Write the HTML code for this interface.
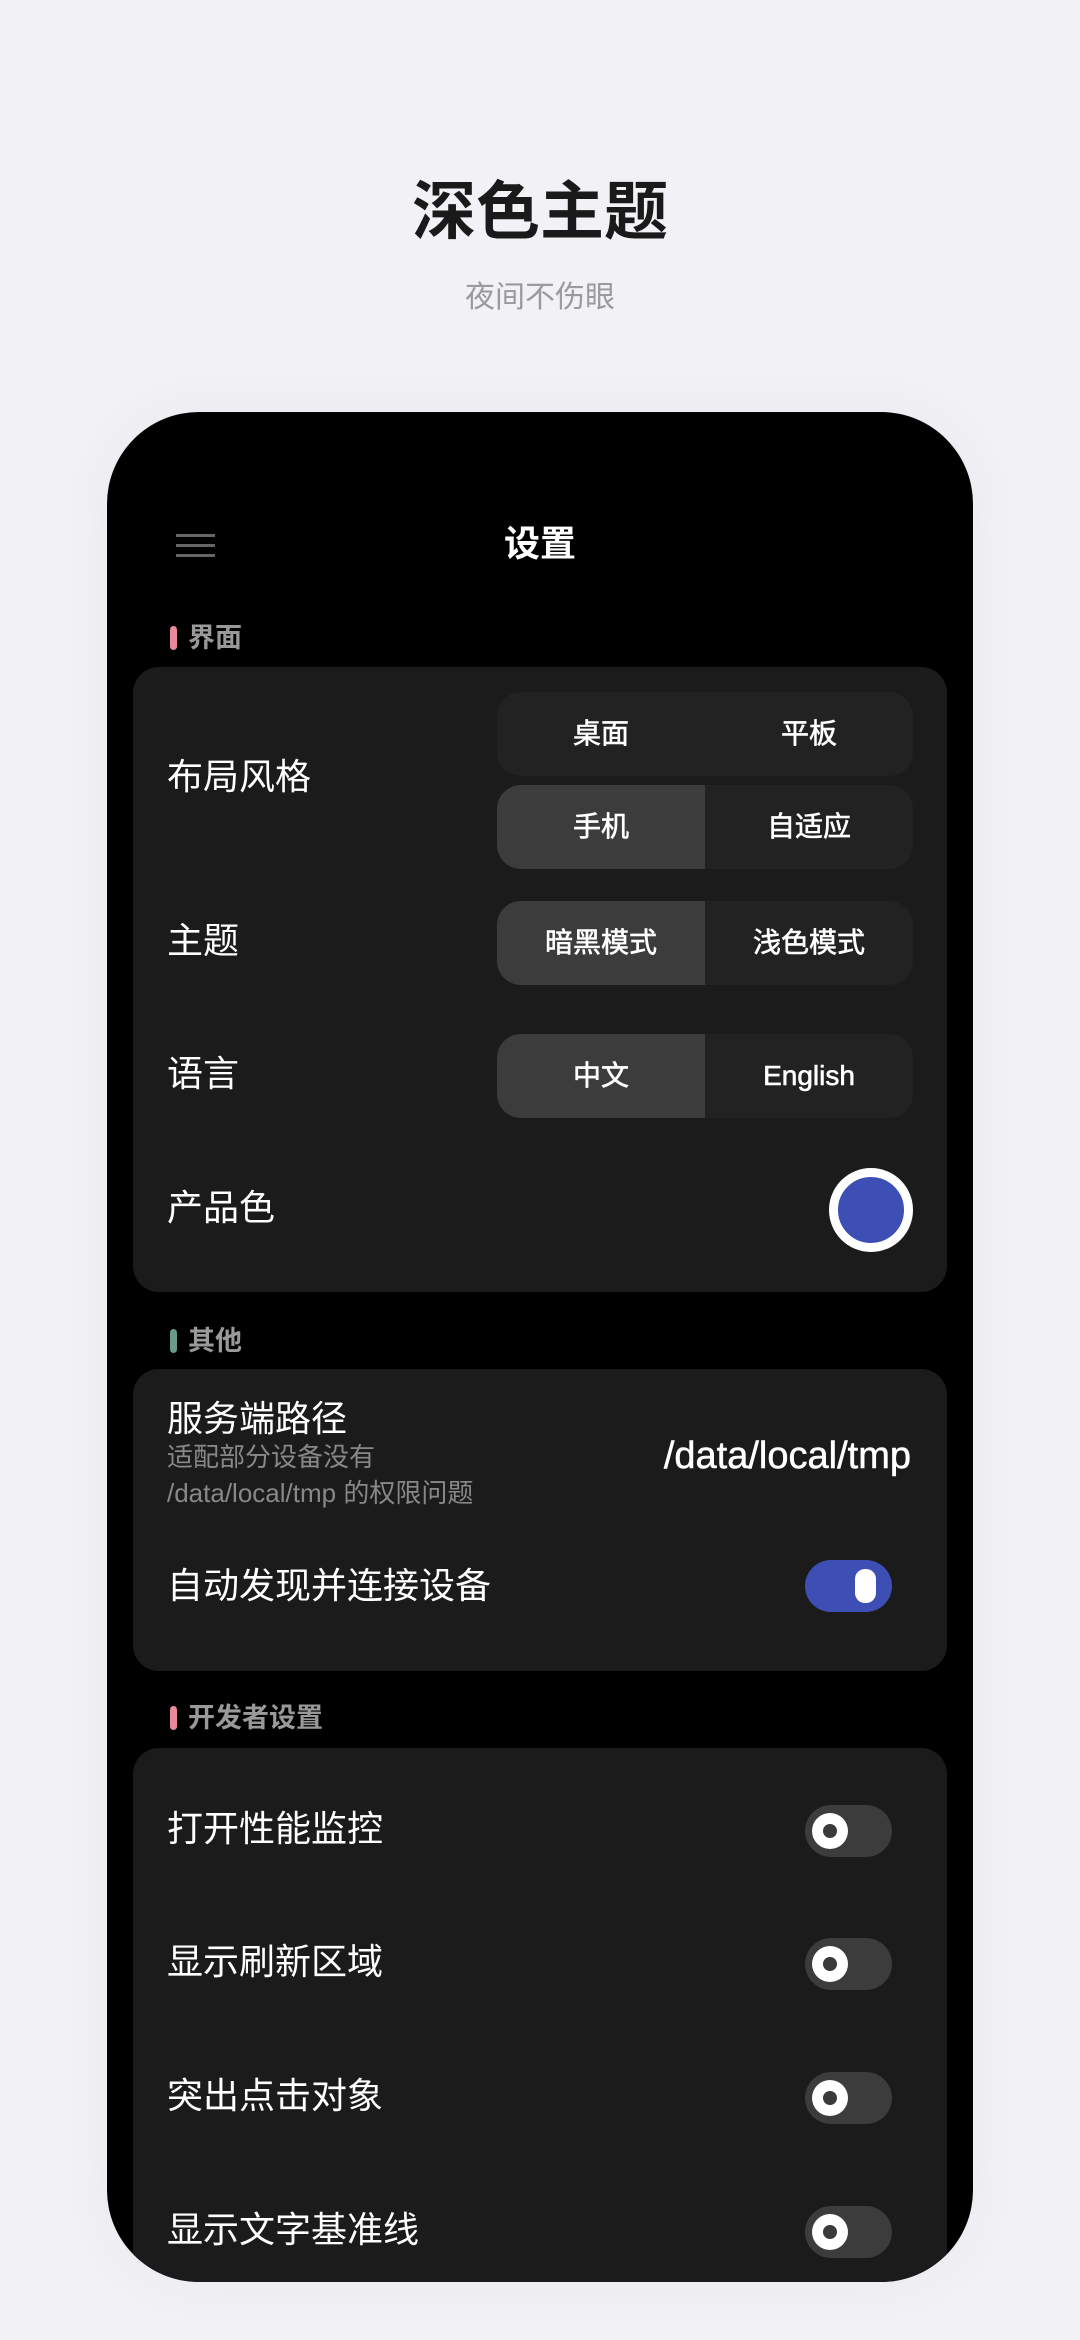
<!DOCTYPE html>
<html><head><meta charset="utf-8"><style>
*{margin:0;padding:0;box-sizing:border-box}
body{width:1080px;height:2340px;background:#f2f2f6;font-family:"Liberation Sans","Noto Sans CJK SC",sans-serif;position:relative;overflow:hidden}
.abs{position:absolute}
.t1{left:0;width:1080px;top:170px;text-align:center;font-size:64px;font-weight:bold;color:#1a1a1a;line-height:84px}
.t2{left:0;width:1080px;top:278px;text-align:center;font-size:30px;color:#9a9a9a;line-height:40px}
.phone{left:107px;top:412px;width:866px;height:1870px;background:#000;border-radius:92px;overflow:hidden;box-shadow:0 0 60px rgba(0,0,0,0.04)}
.card{position:absolute;left:26px;width:814px;background:#1b1b1b;border-radius:26px}
.lbl{position:absolute;left:34px;font-size:36px;color:#fff;line-height:44px;transform:translateY(-50%)}
.sec{position:absolute;left:81px;font-size:27px;font-weight:bold;color:#999;line-height:34px;transform:translateY(-50%)}
.bar{position:absolute;left:-18px;top:5px;width:7px;height:24px;border-radius:4px}
.seg{position:absolute;left:364px;width:416px;height:84px;border-radius:24px;background:#222;display:flex;overflow:hidden}
.seg div{flex:1;text-align:center;line-height:84px;font-size:28px;color:#fff;-webkit-text-stroke:0.6px #fff}
.seg .on{background:#3c3c3c}
.tg{position:absolute;left:672px;width:87px;height:52px;border-radius:26px;background:#3c3c3c}
.tg .k{position:absolute;left:7px;top:8px;width:36px;height:36px;border-radius:50%;background:#fff}
.tg .k:after{content:"";position:absolute;left:11px;top:11px;width:14px;height:14px;border-radius:50%;background:#3a3a3a}
</style></head><body>
<div class="abs t1">深色主题</div>
<div class="abs t2">夜间不伤眼</div>
<div class="abs phone">
  <div class="abs" style="left:69px;top:122px;width:39px;height:3px;background:#666"></div>
  <div class="abs" style="left:69px;top:132px;width:39px;height:3px;background:#666"></div>
  <div class="abs" style="left:69px;top:142px;width:39px;height:3px;background:#666"></div>
  <div class="abs" style="left:0;width:866px;top:110px;text-align:center;font-size:36px;font-weight:bold;color:#fff;line-height:44px">设置</div>

  <div class="sec" style="top:226px"><span class="bar" style="background:#e98a9a"></span>界面</div>
  <div class="card" style="top:255px;height:625px">
    <div class="lbl" style="top:110px">布局风格</div>
    <div class="seg" style="top:25px"><div>桌面</div><div>平板</div></div>
    <div class="seg" style="top:118px"><div class="on">手机</div><div>自适应</div></div>
    <div class="lbl" style="top:274px">主题</div>
    <div class="seg" style="top:234px"><div class="on">暗黑模式</div><div>浅色模式</div></div>
    <div class="lbl" style="top:407px">语言</div>
    <div class="seg" style="top:367px"><div class="on">中文</div><div>English</div></div>
    <div class="lbl" style="top:541px">产品色</div>
    <div class="abs" style="left:696px;top:501px;width:84px;height:84px;border-radius:50%;background:#3d4eb5;border:9px solid #fff"></div>
  </div>

  <div class="sec" style="top:929px"><span class="bar" style="background:#6a9a88"></span>其他</div>
  <div class="card" style="top:957px;height:302px">
    <div class="lbl" style="transform:none;top:28px">服务端路径</div>
    <div class="abs" style="left:34px;top:70px;font-size:26px;color:#888;line-height:36px">适配部分设备没有<br>/data/local/tmp 的权限问题</div>
    <div class="abs" style="right:36px;top:64px;font-size:38px;color:#fff;line-height:46px;-webkit-text-stroke:0.5px #fff">/data/local/tmp</div>
    <div class="lbl" style="top:217px">自动发现并连接设备</div>
    <div class="tg" style="top:191px;background:#3d4eb5"><div class="abs" style="left:50px;top:9px;width:21px;height:34px;border-radius:10px;background:#fff"></div></div>
  </div>

  <div class="sec" style="top:1306px"><span class="bar" style="background:#e98a9a"></span>开发者设置</div>
  <div class="card" style="top:1336px;height:700px">
    <div class="lbl" style="top:81px">打开性能监控</div>
    <div class="tg" style="top:57px"><div class="k"></div></div>
    <div class="lbl" style="top:214px">显示刷新区域</div>
    <div class="tg" style="top:190px"><div class="k"></div></div>
    <div class="lbl" style="top:348px">突出点击对象</div>
    <div class="tg" style="top:324px"><div class="k"></div></div>
    <div class="lbl" style="top:482px">显示文字基准线</div>
    <div class="tg" style="top:458px"><div class="k"></div></div>
  </div>
</div>
</body></html>
